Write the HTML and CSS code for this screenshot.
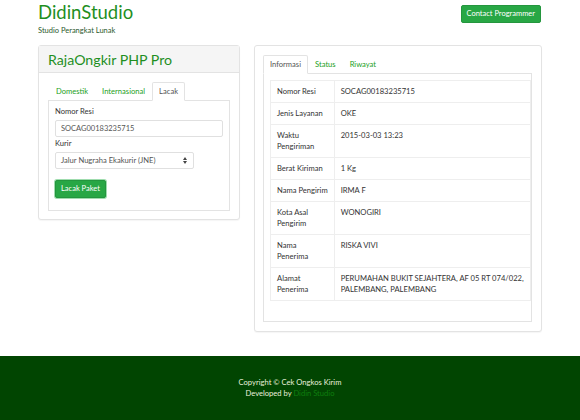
FILE: index.html
```html
<!DOCTYPE html>
<html lang="id">
<head>
  <meta charset="UTF-8" />
  <title>Cek Ongkos Kirim</title>
  <link rel="stylesheet" href="styles.css">
</head>
<body>

  <div class="wrap">
    <!-- Header -->
    <header class="top">
      <div>
        <h1 class="brand">DidinStudio</h1>
        <p class="tagline">Studio Perangkat Lunak</p>
      </div>
      <a class="btn btn-green" href="#">Contact Programmer</a>
    </header>

    <div class="row">
      <!-- Form -->
      <div class="panel panel-left">
        <div class="panel-heading">
          <h2>RajaOngkir PHP Pro</h2>
        </div>
        <div class="panel-body">
          <ul class="tabs">
            <li><a href="#">Domestik</a></li>
            <li><a href="#">Internasional</a></li>
            <li class="active"><a href="#">Lacak</a></li>
          </ul>
          <div class="tab-box form-box">
            <label>Nomor Resi</label>
            <input class="field" type="text" value="SOCAG00183235715">
            <label>Kurir</label>
            <div class="select">
              <span>Jalur Nugraha Ekakurir (JNE)</span>
              <svg class="arrows" width="4" height="7" viewBox="0 0 4 7"><path d="M0 3 L2 0 L4 3 Z M0 4 L4 4 L2 7 Z" fill="#444"/></svg>
            </div>
            <button class="btn btn-green btn-focus">Lacak Paket</button>
          </div>
        </div>
      </div>

      <!-- Result -->
      <div class="panel panel-right">
        <div class="panel-body">
          <ul class="tabs">
            <li class="active"><a href="#">Informasi</a></li>
            <li><a href="#">Status</a></li>
            <li><a href="#">Riwayat</a></li>
          </ul>
          <div class="tab-box">
            <table class="info">
              <tr><td>Nomor Resi</td><td>SOCAG00183235715</td></tr>
              <tr><td>Jenis Layanan</td><td>OKE</td></tr>
              <tr><td>Waktu<br>Pengiriman</td><td>2015-03-03 13:23</td></tr>
              <tr><td>Berat Kiriman</td><td>1 Kg</td></tr>
              <tr><td>Nama Pengirim</td><td>IRMA F</td></tr>
              <tr><td>Kota Asal<br>Pengirim</td><td>WONOGIRI</td></tr>
              <tr><td>Nama<br>Penerima</td><td>RISKA VIVI</td></tr>
              <tr><td>Alamat<br>Penerima</td><td>PERUMAHAN BUKIT SEJAHTERA, AF 05 RT 074/022,<br>PALEMBANG, PALEMBANG</td></tr>
            </table>
          </div>
        </div>
      </div>
    </div>
  </div>

  <footer class="foot">
    <p>Copyright &copy; Cek Ongkos Kirim</p>
    <p>Developed by <a href="#">Didin Studio</a></p>
  </footer>

</body>
</html>
```

FILE: styles.css
```css
* {
  margin: 0;
  padding: 0;
  box-sizing: border-box;
}

body {
  font-family: Lato, "Liberation Sans", sans-serif;
  font-size: 7.6px;
  line-height: 11px;
  color: #333;
  background: #fff;
}

a {
  color: #23a023;
  text-decoration: none;
}

.wrap {
  width: 504px;
  margin: 0 auto;
}

/* header */
.top {
  display: flex;
  justify-content: space-between;
  align-items: flex-start;
  height: 45px;
}

.brand {
  font-size: 18.5px;
  font-weight: 400;
  line-height: 22px;
  color: #1f8f1f;
  margin-top: 1px;
}

.tagline {
  font-size: 7.5px;
  color: #2d5a2d;
  margin-top: 2px;
}

.btn {
  display: inline-block;
  font-family: inherit;
  font-size: 7.5px;
  color: #fff;
  border: 1px solid #24963e;
  border-radius: 2px;
  line-height: 10px;
  cursor: pointer;
}

.btn-green {
  background: #28a745;
}

.top .btn {
  margin-top: 5px;
  margin-right: 1px;
  padding: 3px 5px;
}

/* panels */
.row {
  display: flex;
  gap: 14px;
  align-items: flex-start;
}

.panel {
  border: 1px solid #e3e3e3;
  border-radius: 3px;
  background: #fff;
  box-shadow: 0 1px 1px rgba(0,0,0,0.04);
}

.panel-left {
  width: 202px;
}

.panel-right {
  width: 288px;
}

.panel-heading {
  background: #f5f5f5;
  border-bottom: 1px solid #e3e3e3;
  padding: 5px 9px 4px;
  height: 27px;
}

.panel-heading h2 {
  font-size: 14.2px;
  font-weight: 400;
  line-height: 17px;
  color: #1f8f1f;
}

.panel-left .panel-body {
  padding: 9px 9px 8px;
}

.panel-right .panel-body {
  padding: 9px 9px 9px 8px;
}

/* tabs */
.tabs {
  list-style: none;
  display: flex;
  border-bottom: 1px solid #e3e3e3;
}

.tabs li {
  margin-bottom: -1px;
}

.tabs a {
  display: block;
  padding: 3px 6px;
  line-height: 11px;
  border: 1px solid transparent;
  border-radius: 2px 2px 0 0;
}

.tabs .active a {
  color: #555;
  background: #fff;
  border-color: #e3e3e3 #e3e3e3 transparent;
}

.panel-left .tabs li:first-child a {
  padding-left: 7px;
}

.tab-box {
  border: 1px solid #e3e3e3;
  border-top: 0;
  padding: 6px;
}

/* form */
.form-box {
  padding: 5px 6px 12px;
}

.form-box label {
  display: block;
  margin-bottom: 3px;
}

.field {
  display: block;
  width: 100%;
  height: 17px;
  padding: 0 5px;
  font-family: inherit;
  font-size: 7.5px;
  color: #555;
  border: 1px solid #e0e0e0;
  border-radius: 2px;
  margin-bottom: 1px;
}

.select {
  display: flex;
  justify-content: space-between;
  align-items: center;
  width: 139px;
  height: 17px;
  padding: 0 6px 0 5px;
  color: #555;
  border: 1px solid #e0e0e0;
  border-radius: 2px;
}

.btn-focus {
  margin-top: 11px;
  padding: 3px 5px;
  box-shadow: 0 0 0 1px #9fdcae;
}

/* table */
.info {
  width: 100%;
  border-collapse: collapse;
  margin-bottom: 14px;
}

.info td {
  border: 1px solid #eee;
  padding: 5px 6px;
  vertical-align: top;
  line-height: 11px;
  white-space: nowrap;
}

.info td:first-child {
  width: 62px;
}

/* footer */
.foot {
  margin-top: 24px;
  background: #014501;
  color: #e9f0dc;
  text-align: center;
  padding: 21px 0 30px;
  line-height: 11px;
}

.foot a {
  color: #0e7e0e;
}
```
